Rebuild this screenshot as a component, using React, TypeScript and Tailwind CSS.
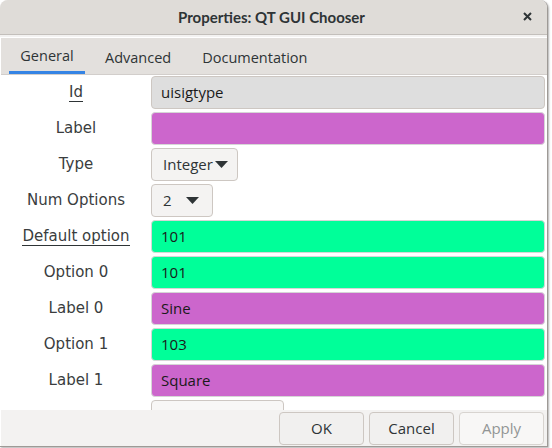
import { ReactNode } from "react";

const labelFont = { fontFamily: '"DejaVu Sans", sans-serif' };

interface Row {
  label: string;
  value?: string;
  kind: "ro" | "magenta" | "green" | "combo";
  underline?: boolean;
  comboWidth?: string;
}

const rows: Row[] = [
  { label: "Id", value: "uisigtype", kind: "ro", underline: true },
  { label: "Label", value: "", kind: "magenta" },
  { label: "Type", value: "Integer", kind: "combo", comboWidth: "w-[87px]" },
  { label: "Num Options", value: "2", kind: "combo", comboWidth: "w-[62px]" },
  { label: "Default option", value: "101", kind: "green", underline: true },
  { label: "Option 0", value: "101", kind: "green" },
  { label: "Label 0", value: "Sine", kind: "magenta" },
  { label: "Option 1", value: "103", kind: "green" },
  { label: "Label 1", value: "Square", kind: "magenta" },
];

function Caret() {
  return (
    <svg width="13" height="8" viewBox="0 0 13 8" className="shrink-0">
      <path d="M0 0 L13 0 L6.5 7 Z" fill="#2e3436" />
    </svg>
  );
}

function Field({ row }: { row: Row }): ReactNode {
  if (row.kind === "combo") {
    const isType = row.label === "Type";
    return (
      <div
        className={`${row.comboWidth} h-[33px] rounded-[4px] border border-[#cdc7c2] bg-[#f4f3f2] flex items-center pl-[11px] ${isType ? "gap-[2px]" : "gap-[14px]"} text-[15px] text-[#2e3436]`}
      >
        <span>{row.value}</span>
        <Caret />
      </div>
    );
  }
  const bg =
    row.kind === "ro" ? "bg-[#dedede] border-[#cdc7c2]" : row.kind === "green" ? "bg-[#00ff99] border-[#d6d6d6]" : "bg-[#cc66cc] border-[#d6d6d6]";
  return (
    <div className={`flex-1 h-[33px] rounded-[4px] border ${bg} flex items-center pl-[9px] text-[15px] text-[#1a1a1a]`}>
      {row.value}
    </div>
  );
}

export default function App() {
  return (
    <div className="w-[552px] h-[448px] bg-white overflow-hidden" style={{ fontFamily: '"Open Sans", sans-serif' }}>
      <div className="w-[548px] h-[447px] flex flex-col rounded-t-[8px] border-r border-b border-[#9e9a96] bg-[#f3f2f1] overflow-hidden shadow-[1px_1px_2px_rgba(0,0,0,0.3)]">
        {/* title bar */}
        <div className="h-[35px] shrink-0 relative flex items-center justify-center bg-[#dfdcd8] border-b border-[#c3bfbb]">
          <span className="text-[15px] font-bold text-[#2e3436] pr-[4px]" style={{ fontFamily: "Lato, sans-serif" }}>
            Properties: QT GUI Chooser
          </span>
          <svg width="9" height="9" viewBox="0 0 9 9" className="absolute right-[15px] top-[12px]">
            <path d="M1 1 L8 8 M8 1 L1 8" stroke="#2e3436" strokeWidth="2" />
          </svg>
        </div>

        {/* notebook */}
        <div className="flex-1 flex flex-col mt-[2px] border-t border-l border-white overflow-hidden">
          <div className="h-[37px] shrink-0 flex items-stretch bg-[#e3e0dd] border-b border-[#d2cecb] text-[14.5px] text-[#2e3436]">
            <div className="ml-[8px] w-[76px] flex items-center justify-center border-b-[3px] border-[#3584e4] pt-[3px]">General</div>
            <div className="ml-[20px] flex items-center pt-[3px]">Advanced</div>
            <div className="ml-[31px] flex items-center pt-[3px]">Documentation</div>
          </div>

          <div className="flex-1 bg-white overflow-hidden pt-[1px] pr-[2px] flex flex-col gap-[3px]">
            {rows.map((row) => (
              <div key={row.label} className="flex items-center h-[33px] shrink-0">
                <div className="w-[150px] shrink-0 flex justify-center text-[15px] text-[#3a3d3e]" style={labelFont}>
                  <span className={row.underline ? "border-b border-[#2e3436] leading-[18px]" : ""}>{row.label}</span>
                </div>
                <Field row={row} />
              </div>
            ))}
            <div className="flex h-[33px] shrink-0">
              <div className="w-[150px] shrink-0" />
              <div className="w-[133px] h-[33px] rounded-[4px] border border-[#cdc7c2] bg-[#f8f7f6]" />
            </div>
          </div>

          <div className="h-[36px] shrink-0 flex items-center justify-end gap-[5px] pr-[3px] bg-[#f3f2f1] text-[15px]">
            <button className="w-[85px] h-[33px] rounded-[4px] border border-[#cdc7c2] bg-[#f1f0ef] text-[#2e3436]">OK</button>
            <button className="w-[85px] h-[33px] rounded-[4px] border border-[#cdc7c2] bg-[#f1f0ef] text-[#2e3436]">Cancel</button>
            <button className="w-[85px] h-[33px] rounded-[4px] border border-[#d8d4d0] bg-[#f8f7f6] text-[#929595]">Apply</button>
          </div>
        </div>
      </div>
    </div>
  );
}
